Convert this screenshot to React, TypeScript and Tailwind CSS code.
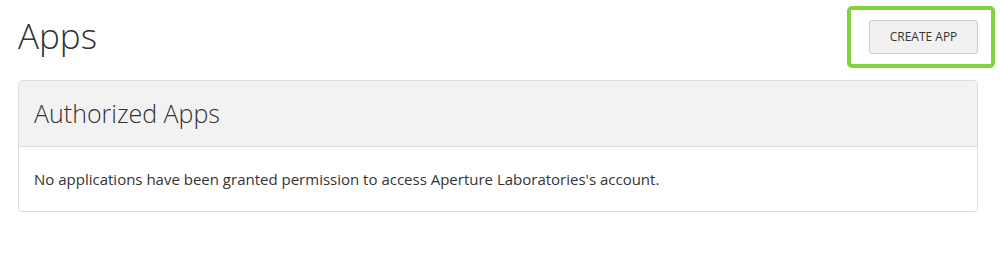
export default function App() {
  return (
    <div className="min-h-[266px] bg-white px-[18px] pt-[6px] font-['Open_Sans',sans-serif] text-[#333]">
      <div className="w-[960px]">
        <div className="flex items-start justify-between">
          <h1 className="pt-[10px] text-[35px] font-light leading-[40px] text-[#333]">Apps</h1>
          <div className="-mr-[17px] rounded-[5px] border-4 border-[#7ed43a] pt-[10px] pr-[13px] pb-[10px] pl-[18px]">
            <button className="h-[34px] w-[109px] rounded-[3px] border border-[#ccc] bg-[#f1f1f1] text-[12px] text-[#333]">
              CREATE APP
            </button>
          </div>
        </div>
        <section className="mt-[12px] rounded-[4px] border border-[#ddd]">
          <div className="flex h-[66px] items-center border-b border-[#ddd] bg-[#f2f2f2] px-[15px]">
            <h2 className="text-[25px] font-light text-[#333]">Authorized Apps</h2>
          </div>
          <div className="px-[15px] py-[21px]">
            <p className="text-[15px] leading-[22px] text-[#333]">
              No applications have been granted permission to access Aperture Laboratories's account.
            </p>
          </div>
        </section>
      </div>
    </div>
  );
}
